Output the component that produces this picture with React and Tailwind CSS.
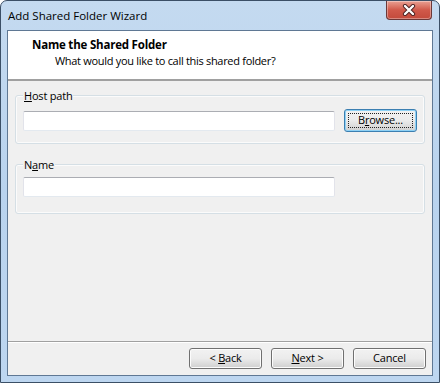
const font = { fontFamily: '"Open Sans", "Noto Sans", sans-serif' }

function WinButton({ children, focused, className = '' }) {
  return (
    <button
      className={`relative w-[73px] rounded-[3px] border text-[11px] tracking-[-0.2px] text-black bg-gradient-to-b from-[#f2f2f2] via-[#ebebeb] to-[#cfcfcf] ${
        focused ? 'border-[#3c7fb1] shadow-[inset_0_0_0_1px_#8ed1f5]' : 'border-[#707070] shadow-[inset_0_0_0_1px_#fcfcfc]'
      } ${className}`}
    >
      {focused && <span className="absolute inset-[3px] border border-dotted border-[#222]" />}
      <span className="relative">{children}</span>
    </button>
  )
}

function TextField() {
  return (
    <div className="h-[20px] w-[312px] rounded-[2px] border border-[#e2e3ea] border-t-[#abadb3] border-b-[#e3e9ef] bg-white" />
  )
}

function Group({ label, children, className = '', labelGap }) {
  return (
    <div className={`mx-[7px] rounded-[3px] border border-[#d5dfe5] px-[7px] shadow-[inset_0_0_0_1px_#fbfbfb] ${className}`}>
      <div className={`-mt-[7px] w-fit bg-[#f0f0f0] px-[1px] text-[11px] leading-[14px] tracking-[-0.2px] text-black ${labelGap}`}>
        {label}
      </div>
      {children}
    </div>
  )
}

export default function App() {
  return (
    <div
      style={font}
      className="flex h-[383px] w-[440px] flex-col overflow-hidden rounded-t-[7px] border border-[#3b4f66] bg-gradient-to-b from-[#c4daf0] via-[#b9d3ee] to-[#bdd6f0]"
    >
      {/* title bar */}
      <div className="flex h-[29px] shrink-0 items-start justify-between">
        <span className="pl-[7px] pt-[7px] text-[11.5px] leading-[16px] text-black">Add Shared Folder Wizard</span>
        <div className="mr-[7px] flex h-[19px] w-[46px] items-center justify-center rounded-b-[4px] border border-t-0 border-[#6b3838] bg-gradient-to-b from-[#e8a093] via-[#d0594a] to-[#c34a3c] shadow-[inset_0_0_0_1px_rgba(255,255,255,0.35)]">
          <svg width="14" height="12" viewBox="0 0 14 12">
            <path d="M3 2 L11 10 M11 2 L3 10" stroke="#4a2020" strokeWidth="4.2" strokeLinecap="round" />
            <path d="M3 2 L11 10 M11 2 L3 10" stroke="#ffffff" strokeWidth="2.4" strokeLinecap="round" />
          </svg>
        </div>
      </div>

      {/* client area */}
      <div className="mx-[6px] flex h-[346px] flex-col border border-[#5f7894] bg-[#f0f0f0]">
        <div className="h-[50px] shrink-0 border-b-2 border-b-[#a0a0a0] bg-white pl-[24px] pt-[6px]">
          <div className="text-[11.5px] font-bold leading-[15px] tracking-[-0.2px] text-black">Name the Shared Folder</div>
          <div className="pl-[23px] pt-[1px] text-[11px] leading-[15px] tracking-[-0.3px] text-black">
            What would you like to call this shared folder?
          </div>
        </div>

        <div className="flex flex-1 flex-col gap-[20px] pt-[14px]">
          <Group label={<><u>H</u>ost path</>} className="pb-[11px]" labelGap="mb-[6px]">
            <div className="flex items-center gap-[9px]">
              <TextField />
              <WinButton focused className="h-[23px]">
                B<u>r</u>owse...
              </WinButton>
            </div>
          </Group>
          <Group label={<>N<u>a</u>me</>} className="pb-[16px]" labelGap="mb-[5px]">
            <TextField />
          </Group>
        </div>

        <div className="flex h-[34px] shrink-0 items-center justify-end gap-[9px] border-t border-[#a0a0a0] pr-[6px] shadow-[inset_0_1px_0_#fff]">
          <WinButton className="h-[21px]">
            &lt; <u>B</u>ack
          </WinButton>
          <WinButton className="h-[21px]">
            <u>N</u>ext &gt;
          </WinButton>
          <WinButton className="h-[21px]">Cancel</WinButton>
        </div>
      </div>
    </div>
  )
}
